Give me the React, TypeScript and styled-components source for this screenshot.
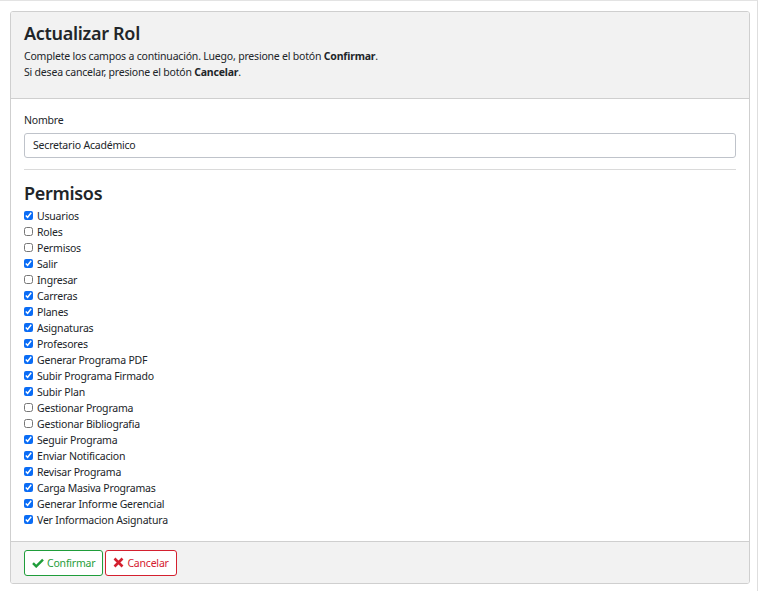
import { createGlobalStyle } from 'styled-components';
import styled from 'styled-components';

const GlobalStyle = createGlobalStyle`
  html, body {
    margin: 0;
    background: #fff;
  }
  body {
    font-family: "Noto Sans", "Open Sans", sans-serif;
    color: #212529;
    letter-spacing: -0.2px;
  }
`;

const Frame = styled.div`
  box-sizing: border-box;
  width: 758px;
  min-height: 591px;
  border-top: 1px solid #e3e3e3;
  border-right: 1px solid #dedede;
  padding: 10px 8px 0 10px;
`;

const Card = styled.div`
  width: 740px;
  box-sizing: border-box;
  border: 1px solid #cfcfcf;
  border-radius: 3px;
  overflow: hidden;
`;

const Header = styled.div`
  background: #f2f2f2;
  border-bottom: 1px solid #cfcfcf;
  padding: 8px 13px 18px;
  height: 87px;
  box-sizing: border-box;
`;

const Title = styled.h2`
  margin: 0 0 2px;
  font-size: 18px;
  font-weight: 600;
  letter-spacing: -0.3px;
  line-height: 26px;
`;

const Lead = styled.p`
  margin: 0;
  font-size: 10.5px;
  line-height: 16px;
`;

const Body = styled.div`
  padding: 13px 13px 13px;
`;

const Label = styled.label`
  display: block;
  font-size: 10.5px;
  line-height: 16px;
  margin-bottom: 4px;
`;

const Input = styled.input`
  box-sizing: border-box;
  width: 100%;
  height: 25px;
  border: 1px solid #bfc3ca;
  border-radius: 3px;
  padding: 0 8px;
  font: inherit;
  font-size: 10.5px;
  letter-spacing: -0.2px;
  color: #212529;
  outline: none;
`;

const Divider = styled.hr`
  border: 0;
  border-top: 1px solid #dadada;
  margin: 11px 0 10px;
`;

const Section = styled.h3`
  margin: 0 0 2px;
  font-size: 18px;
  font-weight: 600;
  letter-spacing: -0.3px;
  line-height: 26px;
`;

const List = styled.div`
  display: flex;
  flex-direction: column;
`;

const Item = styled.label`
  display: flex;
  align-items: center;
  gap: 4px;
  font-size: 10.5px;
  line-height: 16px;
`;

const Box = styled.input`
  width: 9px;
  height: 9px;
  margin: 0;
  accent-color: #0a6cf5;
`;

const Footer = styled.div`
  background: #f2f2f2;
  border-top: 1px solid #cfcfcf;
  padding: 8px 13px 7px;
  display: flex;
  gap: 2px;
`;

const Btn = styled.button<{ $tone: 'ok' | 'cancel' }>`
  display: inline-flex;
  align-items: center;
  gap: 3px;
  height: 26px;
  padding: 0 7px 0 7px;
  background: #fff;
  border: 1px solid ${(p) => (p.$tone === 'ok' ? '#1f9d3a' : '#d4202f')};
  color: ${(p) => (p.$tone === 'ok' ? '#1f9d3a' : '#d4202f')};
  border-radius: 3px;
  font: inherit;
  font-size: 10.5px;
  letter-spacing: -0.2px;
`;

const permisos: [string, boolean][] = [
  ['Usuarios', true],
  ['Roles', false],
  ['Permisos', false],
  ['Salir', true],
  ['Ingresar', false],
  ['Carreras', true],
  ['Planes', true],
  ['Asignaturas', true],
  ['Profesores', true],
  ['Generar Programa PDF', true],
  ['Subir Programa Firmado', true],
  ['Subir Plan', true],
  ['Gestionar Programa', false],
  ['Gestionar Bibliografia', false],
  ['Seguir Programa', true],
  ['Enviar Notificacion', true],
  ['Revisar Programa', true],
  ['Carga Masiva Programas', true],
  ['Generar Informe Gerencial', true],
  ['Ver Informacion Asignatura', true],
];

const CheckIcon = () => (
  <svg width="12" height="10" viewBox="0 0 12 10">
    <path d="M1 5.2 L4.2 8.4 L11 1.6" fill="none" stroke="#1f9d3a" strokeWidth="2.4" />
  </svg>
);

const XIcon = () => (
  <svg width="11" height="11" viewBox="0 0 11 11">
    <path d="M1.5 1.5 L9.5 9.5 M9.5 1.5 L1.5 9.5" fill="none" stroke="#d4202f" strokeWidth="2.6" />
  </svg>
);

export default function App() {
  return (
    <>
      <GlobalStyle />
      <Frame>
        <Card>
          <Header>
            <Title>Actualizar Rol</Title>
            <Lead>
              Complete los campos a continuación. Luego, presione el botón <b>Confirmar</b>.
            </Lead>
            <Lead>
              Si desea cancelar, presione el botón <b>Cancelar</b>.
            </Lead>
          </Header>
          <Body>
            <Label htmlFor="nombre">Nombre</Label>
            <Input id="nombre" defaultValue="Secretario Académico" />
            <Divider />
            <Section>Permisos</Section>
            <List>
              {permisos.map(([name, on]) => (
                <Item key={name}>
                  <Box type="checkbox" defaultChecked={on} />
                  {name}
                </Item>
              ))}
            </List>
          </Body>
          <Footer>
            <Btn $tone="ok">
              <CheckIcon />
              Confirmar
            </Btn>
            <Btn $tone="cancel">
              <XIcon />
              Cancelar
            </Btn>
          </Footer>
        </Card>
      </Frame>
    </>
  );
}
